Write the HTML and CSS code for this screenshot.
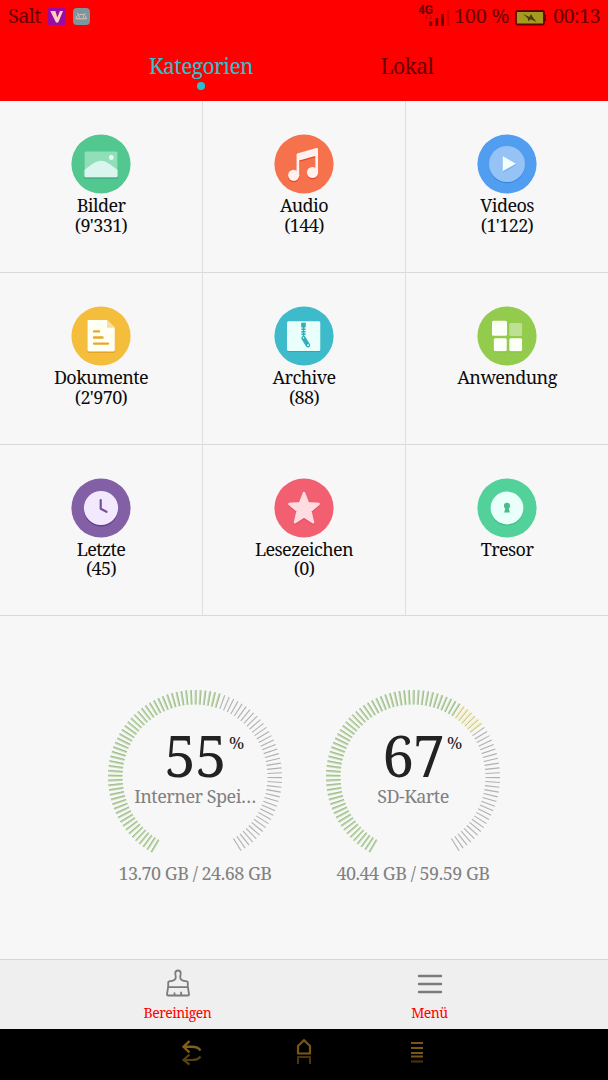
FILE: index.html
```html
<!DOCTYPE html>
<html lang="de">
<head>
    <meta charset="UTF-8">
    <title>Dateimanager</title>
    <link rel="stylesheet" href="styles.css">
</head>
<body>
<div class="header">
    <div class="status">
        <span class="carrier">Salt</span>
        <svg class="app-v" width="17" height="17" viewBox="0 0 17 17"><rect width="17" height="17" rx="1" fill="#9a0aa5"/><path d="M2.3 3H7.4L9.3 9.4L12 3H15L10.2 14.5H8Z" fill="#ffd0bd"/></svg>
        <svg class="app-a" width="17" height="17" viewBox="0 0 17 17"><rect width="17" height="17" rx="4" fill="#7b969c"/><path d="M3 10.8C3 5 13.4 5 13.4 10.8ZM4.2 5L5.6 6.8M12.4 5L10.9 6.8" fill="none" stroke="#e3c3bb" stroke-width="1"/><circle cx="6.3" cy="9" r=".8" fill="#e3c3bb"/><circle cx="10.4" cy="9" r=".8" fill="#e3c3bb"/></svg>
        <div class="signal">
            <span>4G</span>
            <svg width="32" height="22" viewBox="0 0 32 22"><path d="M9.4 9L7.5 11L9.4 13M11.8 9L13.7 11L11.8 13" fill="none" stroke="#a00000"/><path d="M12.8 15.5V20M18.8 12V20M24.5 8V20" stroke="#680000" stroke-width="2.8"/><path d="M30.2 4V20" stroke="#d90000" stroke-width="2.4"/></svg>
        </div>
        <span class="percent">100 %</span>
        <svg class="battery" width="31" height="16" viewBox="0 0 31 16"><rect x="1" y="1" width="28" height="13.5" rx="1.5" fill="#a39c20" stroke="#680000" stroke-width="1.8"/><path d="M30.2 5V11" stroke="#680000" stroke-width="1.6"/><path d="M8 4L14.5 7L16 4L18 7.5L21.5 12L15.5 9.2L13.5 11.5L12.5 8Z" fill="#4e3909"/></svg>
        <span class="time">00:13</span>
    </div>
    <div class="tabs">
        <div class="tab active">Kategorien</div>
        <div class="tab">Lokal</div>
    </div>
</div>

<div class="grid">
    <div class="cell">
        <svg class="icon" viewBox="0 0 60 60"><circle cx="30" cy="30" r="29.6" fill="#52c790"/><rect x="13.5" y="19" width="33" height="25.8" rx="1.5" fill="#3cac79"/><rect x="13.5" y="17.5" width="33" height="25.8" rx="1.5" fill="#91dfb9"/><path d="M13.5 36C20 31 25 26.8 30 26.8S40 31 46.5 36V42Q46.5 43.3 45 43.3H15Q13.5 43.3 13.5 42Z" fill="#daf4ee"/><circle cx="40.3" cy="23.5" r="2.4" fill="#e9fff5"/></svg>
        <div class="label">Bilder<br>(9'331)</div>
    </div>
    <div class="cell">
        <svg class="icon" viewBox="0 0 60 60"><circle cx="30" cy="30" r="29.6" fill="#f6724d"/><g fill="#e44527" transform="translate(0 1.2)"><circle cx="19.7" cy="41.3" r="5.6"/><circle cx="38.5" cy="38.5" r="5.6"/><path d="M22.5 21Q22.5 19.5 24 19.2L42.5 14Q44 13.7 44 15V38.5H41.3V22L25.2 26.5V41.5H22.5Z"/></g><g fill="#fff1ee"><circle cx="19.7" cy="41.3" r="5.6"/><circle cx="38.5" cy="38.5" r="5.6"/><path d="M22.5 21Q22.5 19.5 24 19.2L42.5 14Q44 13.7 44 15V38.5H41.3V22L25.2 26.5V41.5H22.5Z"/></g></svg>
        <div class="label">Audio<br>(144)</div>
    </div>
    <div class="cell">
        <svg class="icon" viewBox="0 0 60 60"><circle cx="30" cy="30" r="29.6" fill="#519def"/><circle cx="30" cy="31.2" r="18" fill="#3686e6"/><circle cx="30" cy="30" r="18" fill="#96c3f5"/><path d="M26.3 23.2V38.5L39 30.8Z" fill="#78adeb"/><path d="M25.8 22.2V37.2L38.8 29.7Z" fill="#f2fffb"/></svg>
        <div class="label">Videos<br>(1'122)</div>
    </div>
    <div class="cell">
        <svg class="icon" viewBox="0 0 60 60"><circle cx="30" cy="30" r="29.6" fill="#f5bd3c"/><path d="M17.8 15.2H36L43.8 23V45.5Q43.8 46.7 42.5 46.7H17.8Q16.5 46.7 16.5 45.5V16.5Z" fill="#e49b20"/><path d="M17.8 13.9H36L43.8 21.7V44Q43.8 45.4 42.5 45.4H17.8Q16.5 45.4 16.5 44V15.2Q16.5 13.9 17.8 13.9Z" fill="#fffff4"/><path d="M36 13.9L43.8 21.7H36Z" fill="#f6dfaa"/><path d="M23 25.4H28M23 31.5H31.5M23 37.6H37" stroke="#eca528" stroke-width="2.4" stroke-linecap="round"/></svg>
        <div class="label">Dokumente<br>(2'970)</div>
    </div>
    <div class="cell">
        <svg class="icon" viewBox="0 0 60 60"><circle cx="30" cy="30" r="29.6" fill="#3dbbca"/><rect x="13" y="16.3" width="33.3" height="29.8" rx="1.5" fill="#28a8b9"/><rect x="13" y="15.3" width="33.3" height="29.8" rx="1.5" fill="#e8fffb"/><path d="M29.5 16.7V20.5" stroke="#35adb9" stroke-width="4.6"/><path d="M29.5 20V30" stroke="#35adb9" stroke-width="4.2" stroke-dasharray="1.5 1"/><path d="M29.5 20V31" stroke="#35adb9" stroke-width="1.5"/><path d="M29.5 32L34 39.3" stroke="#35adb9" stroke-width="4.4" stroke-linecap="round"/><circle cx="29.5" cy="31.7" r=".8" fill="#e8fffb"/><circle cx="34" cy="39.2" r=".9" fill="#e8fffb"/></svg>
        <div class="label">Archive<br>(88)</div>
    </div>
    <div class="cell">
        <svg class="icon" viewBox="0 0 60 60"><circle cx="30" cy="30" r="29.6" fill="#93cb4c"/><g fill="#7ebc38"><rect x="16.8" y="33.3" width="13" height="13" rx="1.5"/><rect x="32.3" y="33.3" width="12.8" height="13" rx="1.5"/></g><rect x="15" y="14.7" width="15" height="15" rx="1.5" fill="#fcfff6"/><rect x="32.3" y="17" width="12.8" height="13" rx="1.5" fill="#bee094"/><g fill="#fcfff6"><rect x="16.8" y="32.2" width="13" height="13" rx="1.5"/><rect x="32.3" y="32.2" width="12.8" height="13" rx="1.5"/></g></svg>
        <div class="label">Anwendung</div>
    </div>
    <div class="cell">
        <svg class="icon" viewBox="0 0 60 60"><circle cx="30" cy="30" r="29.6" fill="#835fa5"/><circle cx="30" cy="31.4" r="17.1" fill="#674090"/><circle cx="30" cy="30" r="17.1" fill="#f3e9ff"/><path d="M29.7 22V30.8L35.5 33.8" fill="none" stroke="#73509a" stroke-width="2.2" stroke-linecap="round" stroke-linejoin="round"/></svg>
        <div class="label">Letzte<br>(45)</div>
    </div>
    <div class="cell">
        <svg class="icon" viewBox="0 0 60 60"><circle cx="30" cy="30" r="29.6" fill="#f15f70"/><path d="M30 16L34 26.3L44.7 27L36.4 34L39 45.3L30 39.5L21 45.3L23.6 34L15.3 27L26 26.3Z" fill="#e4495d" stroke="#e4495d" stroke-width="2.4" stroke-linejoin="round"/><path d="M30 15L34 25.3L44.7 26L36.4 33L39 44.3L30 38.5L21 44.3L23.6 33L15.3 26L26 25.3Z" fill="#ffdce2" stroke="#ffdce2" stroke-width="2.4" stroke-linejoin="round"/></svg>
        <div class="label">Lesezeichen<br>(0)</div>
    </div>
    <div class="cell">
        <svg class="icon" viewBox="0 0 60 60"><circle cx="30" cy="30" r="29.6" fill="#52d19a"/><circle cx="30" cy="31.2" r="16.4" fill="#3dbb84"/><circle cx="30" cy="30" r="16.4" fill="#e9fffa"/><circle cx="30" cy="27.8" r="3.1" fill="#49bd8c"/><path d="M28.6 29H31.4L32.8 34.4H27.2Z" fill="#49bd8c"/></svg>
        <div class="label">Tresor</div>
    </div>
</div>

<div class="storage">
    <div class="disk">
        <div class="gauge">
            <svg class="ring" data-used="53" viewBox="0 0 176 176"></svg>
            <div class="value">55<span>%</span></div>
            <div class="name">Interner Spei…</div>
        </div>
        <div class="size">13.70 GB / 24.68 GB</div>
    </div>
    <div class="disk">
        <div class="gauge">
            <svg class="ring" data-used="64" viewBox="0 0 176 176"></svg>
            <div class="value">67<span>%</span></div>
            <div class="name">SD-Karte</div>
        </div>
        <div class="size">40.44 GB / 59.59 GB</div>
    </div>
</div>

<div class="toolbar">
    <div class="tool">
        <svg width="26" height="28" viewBox="0 0 26 28"><path d="M3.2 17.5V13.4Q3.2 12.5 4.2 12.4C8.5 12 10.8 11 10.8 8.3C10.8 6.7 10.3 6 10.3 4.2A2.7 2.7 0 0 1 15.7 4.2C15.7 6 15.2 6.7 15.2 8.3C15.2 11 17.5 12 21.8 12.4Q22.8 12.5 22.8 13.4V17.5L24 25.3Q24.1 26.5 23 26.5H3Q1.9 26.5 2 25.3ZM3 18.2H23M9.5 26V23.5M16.2 26L16 22.8" fill="none" stroke="#7b7b7b" stroke-width="1.8"/></svg>
        <span>Bereinigen</span>
    </div>
    <div class="tool">
        <svg width="26" height="28" viewBox="0 0 26 28"><path d="M2 7H24M2 15H24M2 23H24" stroke="#7b7b7b" stroke-width="2.4" stroke-linecap="round"/></svg>
        <span>Menü</span>
    </div>
</div>

<div class="navbar">
    <svg width="24" height="28" viewBox="0 0 24 28"><path d="M10.5 2L4.5 7.8L10.5 13.5M5 7.8H13Q19 7.8 21.5 11.5" fill="none" stroke="#80601a" stroke-width="2.4"/><path d="M10.5 25.5L4.5 21L10.5 15.5M5 21H13Q19 21 21.5 17.5" fill="none" stroke="#574015" stroke-width="2.2"/></svg>
    <svg width="24" height="28" viewBox="0 0 24 28"><path d="M6 14.5V7L12 1.2L18 7V14.5Z" fill="none" stroke="#7a5611" stroke-width="2.2"/><path d="M5 18H19M6 18V25M18 18V25" fill="none" stroke="#49340e" stroke-width="2"/></svg>
    <svg width="24" height="28" viewBox="0 0 24 28"><path d="M6 4H18M6 9H18M6 14H18M6 17.5H18" stroke="#7a5611" stroke-width="2"/><path d="M6 22.5H18" stroke="#49340e" stroke-width="2"/></svg>
</div>

<script>
    // storage rings: one tick every 3.2 degrees, starting bottom left
    const step = 3.2;
    const lastTick = 93;
    const yellowFrom = 58;

    function addTick(ring, angle, name) {
        const line = document.createElementNS('http://www.w3.org/2000/svg', 'line');
        line.setAttribute('x1', 88);
        line.setAttribute('x2', 88);
        line.setAttribute('y1', 160.5);
        line.setAttribute('y2', 175);
        line.setAttribute('class', name);
        line.setAttribute('transform', 'rotate(' + angle + ' 88 88)');
        ring.appendChild(line);
    }

    document.querySelectorAll('.ring').forEach(ring => {
        const used = Number(ring.dataset.used);
        for (let i = 0; i <= lastTick; i++) {
            const angle = 30 + i * step;
            if (i < used) {
                addTick(ring, angle, i >= yellowFrom ? 'tick yellow' : 'tick green');
            }
            addTick(ring, angle + 0.4, i < used ? 'tick thin' : 'tick');
        }
    });
</script>
</body>
</html>
```
FILE: styles.css
```css
* {
    box-sizing: border-box;
}
body {
    margin: 0;
    width: 608px;
    height: 1080px;
    display: flex;
    flex-direction: column;
    overflow: hidden;
    background-color: #f7f7f7;
    color: #0b0b0b;
    font-family: 'Noto Serif', 'Droid Serif', 'DejaVu Serif Condensed', 'DejaVu Serif', serif;
}
.header {
    height: 101px;
    background-color: #ff0000;
    color: #680000;
}
.status {
    display: flex;
    align-items: center;
    height: 33px;
    padding: 0 8px;
    font-size: 20px;
    line-height: 24px;
    letter-spacing: -0.7px;
    white-space: nowrap;
}
.carrier, .percent, .time {
    margin-top: -1px;
}
.app-v {
    margin-left: 7px;
}
.app-a {
    margin-left: 8px;
}
.signal {
    position: relative;
    width: 32px;
    height: 22px;
    margin-left: auto;
}
.signal span {
    position: absolute;
    left: 0;
    top: -2px;
    font: bold 12px/12px Roboto, sans-serif;
    letter-spacing: 0;
}
.signal svg {
    display: block;
}
.percent {
    margin-left: 4px;
    letter-spacing: -0.3px;
}
.battery {
    margin: 2px 7px 0 6px;
}
.tabs {
    display: flex;
    padding: 20px 98px 0;
}
.tab {
    flex: 1;
    text-align: center;
    font-size: 21px;
    line-height: 26px;
    letter-spacing: -0.6px;
}
.tab.active {
    color: #2fc0ce;
}
.tab.active::after {
    content: '';
    display: block;
    width: 8px;
    height: 8px;
    margin: 3px auto 0;
    border-radius: 50%;
    background-color: #25c1cf;
}
.grid {
    display: grid;
    grid-template-columns: 203px 203px 202px;
    grid-template-rows: 172px 171.5px 171.5px;
}
.cell {
    padding-top: 33.3px;
    border-right: 1px solid #dedede;
    border-bottom: 1px solid #d9d9d9;
    text-align: center;
}
.cell:nth-child(3n) {
    border-right: none;
}
.icon {
    display: block;
    width: 60px;
    height: 60px;
    margin: 0 auto 2px;
}
.label {
    font-size: 18px;
    line-height: 19.6px;
    letter-spacing: -0.6px;
}
.storage {
    display: flex;
    justify-content: center;
    gap: 42px;
    height: 343px;
    padding-top: 73px;
}
.disk {
    width: 176px;
    text-align: center;
    color: #808080;
}
.gauge {
    position: relative;
    height: 173px;
    padding-top: 34px;
}
.ring {
    position: absolute;
    left: 0;
    top: 0;
    width: 176px;
    height: 176px;
}
.tick {
    stroke: #b0b0b0;
    stroke-width: 1.1;
}
.tick.green {
    stroke: #bddcaa;
    stroke-width: 2;
}
.tick.yellow {
    stroke: #f5f0bd;
    stroke-width: 3;
}
.tick.thin {
    stroke: #a1b391;
    stroke-width: 0.8;
}
.tick.yellow + .tick.thin {
    stroke: #b9b7a0;
}
.value {
    position: relative;
    color: #222;
    font-size: 57px;
    line-height: 64px;
    letter-spacing: -1px;
}
.value span {
    position: absolute;
    left: 122px;
    top: 10px;
    font-size: 17px;
    line-height: 20px;
    letter-spacing: 0;
}
.name, .size {
    font-size: 18px;
    line-height: 22px;
    letter-spacing: -0.5px;
    white-space: nowrap;
}
.name {
    margin-top: -2px;
}
.toolbar {
    display: flex;
    justify-content: space-between;
    height: 70px;
    padding: 9px 128px 0 127px;
    border-top: 1px solid #d5d5d5;
    background-color: #efefef;
}
.tool {
    display: flex;
    flex-direction: column;
    align-items: center;
    width: 101px;
    color: #ff0000;
    font-size: 14px;
    line-height: 18px;
    letter-spacing: -0.5px;
}
.tool svg {
    margin-bottom: 7px;
}
.navbar {
    flex: 1;
    display: flex;
    justify-content: center;
    gap: 89px;
    padding-top: 10px;
    background-color: #000;
}
```
